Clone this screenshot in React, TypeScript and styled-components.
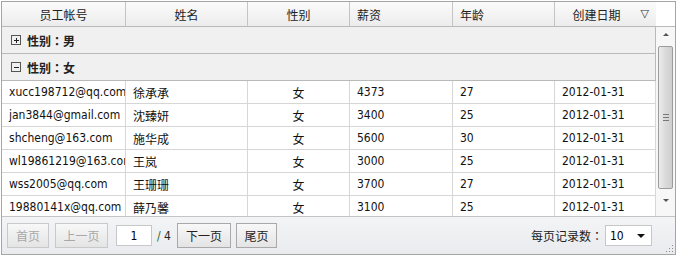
import React from "react";
import styled, { createGlobalStyle } from "styled-components";

const Global = createGlobalStyle`
  html, body { margin: 0; padding: 0; background: #fff; }
  body { font-family: "Liberation Sans", "Noto Sans CJK SC", sans-serif; font-size: 12px; color: #000; }
`;

const COLS = "124px 122px 102px 103px 102px 101px";
const FONT = `"Liberation Sans", "Noto Sans CJK SC", sans-serif`;
const DATA_FONT = `"DejaVu Sans Condensed", "Liberation Sans", "Noto Sans CJK SC", sans-serif`;

const Panel = styled.div`
  margin: 1px 0 0 1px;
  width: 673px;
  border: 1px solid #a5a5a5;
  display: flex;
  flex-direction: column;
  font-family: ${FONT};
  font-size: 12px;
`;

const HeaderBar = styled.div`
  display: flex;
  height: 24px;
  border-bottom: 1px solid #b9b9b9;
  background: #fff;
`;

const HeaderCells = styled.div`
  display: grid;
  grid-template-columns: ${COLS};
  width: 654px;
  background: linear-gradient(#fbfbfb, #ececec);
`;

const HeadCell = styled.div<{ $align: "center" | "left"; $sorted?: boolean }>`
  display: flex;
  align-items: center;
  justify-content: ${(p) => (p.$align === "center" ? "center" : "flex-start")};
  padding-left: ${(p) => (p.$align === "center" ? "0" : "7px")};
  padding-right: ${(p) => (p.$sorted ? "18px" : "0")};
  border-right: 1px solid #c4c4c4;
  position: relative;
  color: #222;
  &:last-child { border-right: none; }
`;

const SortMark = styled.span`
  position: absolute;
  right: 7px;
  top: 5px;
  font-family: "DejaVu Sans", sans-serif;
  font-size: 11px;
  color: #333;
`;

const Body = styled.div`
  display: flex;
  height: 189px;
  border-bottom: 1px solid #c4c4c4;
`;

const Rows = styled.div`
  width: 654px;
  overflow: hidden;
`;

const GroupRow = styled.div`
  height: 26px;
  border-bottom: 1px solid #b9b9b9;
  border-right: 1px solid #b9b9b9;
  background: #f0f0f0;
  display: flex;
  align-items: center;
  padding-left: 9px;
  gap: 6px;
  font-weight: bold;
  color: #222;
`;

const Colon = styled.span`
  font-family: "Noto Sans CJK JP", sans-serif;
`;

const Toggle = styled.span`
  width: 8px;
  height: 8px;
  border: 1px solid #555;
  position: relative;
  box-sizing: content-box;
  &::before {
    content: "";
    position: absolute;
    left: 2px;
    top: 4px;
    width: 5px;
    height: 1px;
    background: #222;
  }
`;

const PlusToggle = styled(Toggle)`
  &::after {
    content: "";
    position: absolute;
    left: 4px;
    top: 2px;
    width: 1px;
    height: 5px;
    background: #222;
  }
`;

const DataRow = styled.div`
  display: grid;
  grid-template-columns: ${COLS};
  height: 22px;
  border-bottom: 1px solid #d6d6d6;
`;

const Cell = styled.div<{ $center?: boolean }>`
  display: flex;
  align-items: center;
  justify-content: ${(p) => (p.$center ? "center" : "flex-start")};
  padding-left: ${(p) => (p.$center ? 0 : 7)}px;
  border-right: 1px solid #d6d6d6;
  white-space: nowrap;
  overflow: hidden;
  font-family: ${DATA_FONT};
  font-size: 12px;
  color: #111;
`;

const Scrollbar = styled.div`
  width: 19px;
  display: flex;
  flex-direction: column;
  align-items: center;
  background: #f7f7f7;
  padding-bottom: 9px;
`;

const Arrow = styled.div<{ $up?: boolean }>`
  height: 14px;
  width: 100%;
  display: flex;
  align-items: center;
  justify-content: center;
  &::before {
    content: "";
    border-left: 3px solid transparent;
    border-right: 3px solid transparent;
    ${(p) => (p.$up ? "border-bottom: 3px solid #555;" : "border-top: 3px solid #555;")}
  }
`;

const Track = styled.div`
  flex: 1;
  display: flex;
  flex-direction: column;
  padding-top: 5px;
`;

const Thumb = styled.div`
  width: 13px;
  height: 141px;
  border: 1px solid #9c9c9c;
  border-radius: 2px;
  background: linear-gradient(90deg, #ececec, #dadada 50%, #cfcfcf);
  display: flex;
  align-items: center;
  justify-content: center;
`;

const Grip = styled.div`
  width: 6px;
  height: 5px;
  border-top: 1px solid #777;
  border-bottom: 1px solid #777;
  position: relative;
  &::after {
    content: "";
    position: absolute;
    left: 0;
    right: 0;
    top: 2px;
    height: 1px;
    background: #777;
  }
`;

const Footer = styled.div`
  height: 37px;
  display: flex;
  align-items: center;
  padding: 0 0 0 5px;
  background: linear-gradient(#f3f4f6, #e9ebee);
  position: relative;
`;

const PageButton = styled.div<{ $disabled?: boolean; $gap?: number; $w: number }>`
  box-sizing: border-box;
  width: ${(p) => p.$w}px;
  height: 25px;
  margin: 0 ${(p) => p.$gap ?? 6}px 0 0;
  border: 1px solid ${(p) => (p.$disabled ? "#c9c9c9" : "#a9a9a9")};
  background: linear-gradient(#f8f8f8, #e4e4e4);
  color: ${(p) => (p.$disabled ? "#a8a8a8" : "#222")};
  display: flex;
  align-items: center;
  justify-content: center;
  font-family: ${FONT};
  font-size: 12px;
  white-space: nowrap;
  flex-shrink: 0;
`;

const PageInput = styled.div`
  box-sizing: border-box;
  width: 36px;
  height: 21px;
  border: 1px solid #c7c7c7;
  background: #fff;
  display: flex;
  align-items: center;
  justify-content: center;
  font-family: ${DATA_FONT};
  font-size: 12px;
`;

const PageTotal = styled.span`
  margin: 0 6px 0 5px;
  font-family: ${DATA_FONT};
  color: #222;
  span { color: #2a6a2a; }
`;

const Spacer = styled.div`
  flex: 1;
`;

const SizeLabel = styled.span`
  color: #222;
  margin-right: 2px;
`;

const Select = styled.div`
  box-sizing: border-box;
  width: 47px;
  height: 21px;
  border: 1px solid #c7c7c7;
  background: #fff;
  display: flex;
  align-items: center;
  padding-left: 4px;
  margin-right: 23px;
  font-family: ${DATA_FONT};
  position: relative;
  &::after {
    content: "";
    position: absolute;
    right: 6px;
    top: 8px;
    border-left: 4px solid transparent;
    border-right: 4px solid transparent;
    border-top: 4px solid #111;
  }
`;

const ResizeGrip = styled.svg`
  position: absolute;
  right: 1px;
  bottom: 1px;
`;

const rows = [
  ["xucc198712@qq.com", "徐承承", "女", "4373", "27", "2012-01-31"],
  ["jan3844@gmail.com", "沈臻妍", "女", "3400", "25", "2012-01-31"],
  ["shcheng@163.com", "施华成", "女", "5600", "30", "2012-01-31"],
  ["wl19861219@163.com", "王岚", "女", "3000", "25", "2012-01-31"],
  ["wss2005@qq.com", "王珊珊", "女", "3700", "27", "2012-01-31"],
  ["19880141x@qq.com", "薛乃馨", "女", "3100", "25", "2012-01-31"],
  ["li2012@qq.com", "李梅", "女", "3200", "26", "2012-01-31"],
];

export default function App() {
  return (
    <>
      <Global />
      <Panel>
        <HeaderBar>
          <HeaderCells>
            <HeadCell $align="center">员工帐号</HeadCell>
            <HeadCell $align="center">姓名</HeadCell>
            <HeadCell $align="center">性别</HeadCell>
            <HeadCell $align="left">薪资</HeadCell>
            <HeadCell $align="left">年龄</HeadCell>
            <HeadCell $align="center" $sorted>
              创建日期
              <SortMark>▽</SortMark>
            </HeadCell>
          </HeaderCells>
        </HeaderBar>
        <Body>
          <Rows>
            <GroupRow>
              <PlusToggle />
              <span>
                性别<Colon>：</Colon>男
              </span>
            </GroupRow>
            <GroupRow>
              <Toggle />
              <span>
                性别<Colon>：</Colon>女
              </span>
            </GroupRow>
            {rows.map((r, i) => (
              <DataRow key={i}>
                <Cell>{r[0]}</Cell>
                <Cell>{r[1]}</Cell>
                <Cell $center>{r[2]}</Cell>
                <Cell>{r[3]}</Cell>
                <Cell>{r[4]}</Cell>
                <Cell>{r[5]}</Cell>
              </DataRow>
            ))}
          </Rows>
          <Scrollbar>
            <Arrow $up />
            <Track>
              <Thumb>
                <Grip />
              </Thumb>
            </Track>
            <Arrow />
          </Scrollbar>
        </Body>
        <Footer>
          <PageButton $disabled $w={42}>首页</PageButton>
          <PageButton $disabled $w={53} $gap={8}>上一页</PageButton>
          <PageInput>1</PageInput>
          <PageTotal>
            <span>/</span> 4
          </PageTotal>
          <PageButton $w={54} $gap={5}>下一页</PageButton>
          <PageButton $w={41}>尾页</PageButton>
          <Spacer />
          <SizeLabel>
            每页记录数<Colon>：</Colon>
          </SizeLabel>
          <Select>10</Select>
          <ResizeGrip width="9" height="9" viewBox="0 0 9 9">
            <g fill="#8a8a8a">
              <rect x="7" y="1" width="1" height="1" />
              <rect x="4" y="4" width="1" height="1" />
              <rect x="7" y="4" width="1" height="1" />
              <rect x="1" y="7" width="1" height="1" />
              <rect x="4" y="7" width="1" height="1" />
              <rect x="7" y="7" width="1" height="1" />
            </g>
          </ResizeGrip>
        </Footer>
      </Panel>
    </>
  );
}
